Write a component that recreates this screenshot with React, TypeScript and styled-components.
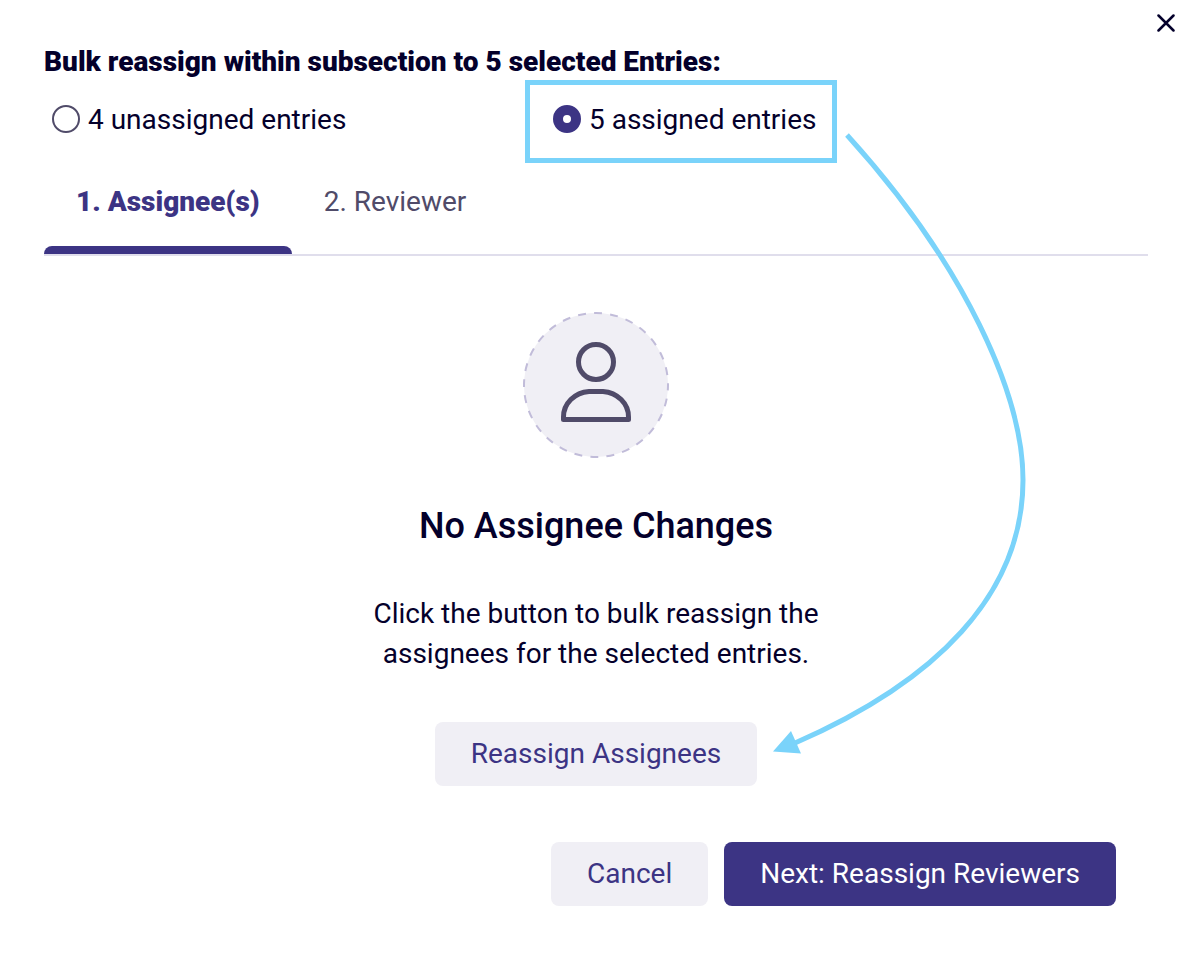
import React from "react";
import styled, { createGlobalStyle } from "styled-components";

const ink = "#04002b";
const indigo = "#3c3484";
const slate = "#504b69";
const mist = "#f0eff5";
const sky = "#7ad3fa";

const GlobalStyle = createGlobalStyle`
  *, *::before, *::after { box-sizing: border-box; }
  body {
    margin: 0;
    background: #fff;
    color: ${ink};
    font-family: Roboto, "Liberation Sans", sans-serif;
    font-size: 28px;
    line-height: 40px;
  }
  button { font: inherit; cursor: pointer; }
`;

const Dialog = styled.main`
  position: relative;
  padding: 0 40px 72px 44px;
`;

const TopBar = styled.div`
  display: flex;
  justify-content: flex-end;
  height: 42px;
  margin-right: -32px;
`;

const CloseButton = styled.button`
  display: grid;
  place-items: center;
  width: 28px;
  height: 46px;
  padding: 0;
  border: 0;
  background: none;
  color: ${ink};
`;

const Title = styled.h1`
  margin: 0;
  font-size: 28px;
  line-height: 40px;
  font-weight: 900;
`;

const Choices = styled.fieldset`
  display: flex;
  margin: 0;
  padding: 17px 94px 0 8px;
  border: 0;
`;

const Choice = styled.label`
  position: relative;
  display: flex;
  align-items: flex-start;
  gap: 8px;
  flex: 1 1 0;
  line-height: 42px;
  cursor: pointer;
`;

const Radio = styled.input`
  appearance: none;
  flex: none;
  width: 28px;
  height: 28px;
  margin: 6px 0 0;
  border: 2px solid ${slate};
  border-radius: 50%;
  background: #fff;
  &:checked {
    border: 10px solid ${indigo};
  }
`;

const Highlight = styled.span`
  position: absolute;
  top: -19px;
  left: -28px;
  width: 312px;
  height: 83px;
  border: 5px solid ${sky};
  pointer-events: none;
`;

const Tabs = styled.div`
  display: flex;
  margin-top: 24px;
  border-bottom: 2px solid #e0deec;
`;

const Tab = styled.button<{ $active?: boolean }>`
  position: relative;
  height: 89px;
  padding: 17px 32px 32px;
  border: 0;
  background: none;
  color: ${(p) => (p.$active ? indigo : slate)};
  font-weight: ${(p) => (p.$active ? 900 : 400)};
  &::after {
    content: "";
    display: ${(p) => (p.$active ? "block" : "none")};
    position: absolute;
    inset: auto 0 0;
    height: 8px;
    border-radius: 8px 8px 0 0;
    background: ${indigo};
  }
`;

const Panel = styled.section`
  display: flex;
  flex-direction: column;
  align-items: center;
  padding-top: 56px;
  text-align: center;
`;

const Heading = styled.h2`
  margin: 44px 0 0;
  font-size: 36px;
  line-height: 48px;
  font-weight: 500;
`;

const Text = styled.p`
  max-width: 480px;
  margin: 44px 0 48px;
`;

const Button = styled.button<{ $primary?: boolean }>`
  height: 64px;
  padding: 0 36px;
  border: 0;
  border-radius: 8px;
  background: ${(p) => (p.$primary ? indigo : mist)};
  color: ${(p) => (p.$primary ? "#fff" : indigo)};
`;

const Footer = styled.footer`
  display: flex;
  justify-content: flex-end;
  gap: 16px;
  padding: 56px 32px 0;
`;

const Arrow = styled.svg`
  position: absolute;
  top: 130px;
  left: 770px;
  pointer-events: none;
`;

function CloseIcon() {
  return (
    <svg width="18" height="18" viewBox="0 0 18 18" fill="none" stroke="currentColor" strokeWidth="2.5" strokeLinecap="round" aria-hidden="true">
      <path d="M1.5 1.5l15 15M16.5 1.5l-15 15" />
    </svg>
  );
}

function PersonBadge() {
  return (
    <svg width="146" height="146" viewBox="0 0 146 146" fill="none" aria-hidden="true">
      <circle cx="73" cy="73" r="72" fill={mist} stroke="#c1bcd9" strokeWidth="2" strokeDasharray="8 8.157" strokeDashoffset="2.5" />
      <circle cx="73" cy="50" r="17.5" stroke={slate} strokeWidth="5" />
      <path d="M40.5 107.5V105A27.5 25.5 0 0 1 66 79.5H80A27.5 25.5 0 0 1 105.5 105V107.5Z" stroke={slate} strokeWidth="5" strokeLinejoin="round" />
    </svg>
  );
}

export default function App() {
  return (
    <>
      <GlobalStyle />
      <Dialog>
        <TopBar>
          <CloseButton aria-label="Close">
            <CloseIcon />
          </CloseButton>
        </TopBar>
        <Title>Bulk reassign within subsection to 5 selected Entries:</Title>
        <Choices>
          <Choice>
            <Radio type="radio" name="scope" />
            4 unassigned entries
          </Choice>
          <Choice>
            <Radio type="radio" name="scope" defaultChecked />
            5 assigned entries
            <Highlight />
          </Choice>
        </Choices>
        <Tabs role="tablist">
          <Tab role="tab" aria-selected="true" $active>1. Assignee(s)</Tab>
          <Tab role="tab" aria-selected="false">2. Reviewer</Tab>
        </Tabs>
        <Panel>
          <PersonBadge />
          <Heading>No Assignee Changes</Heading>
          <Text>Click the button to bulk reassign the assignees for the selected entries.</Text>
          <Button>Reassign Assignees</Button>
        </Panel>
        <Footer>
          <Button>Cancel</Button>
          <Button $primary>Next: Reassign Reviewers</Button>
        </Footer>
        <Arrow width="260" height="630" viewBox="770 130 260 630" fill="none" aria-hidden="true">
          <path d="M847 135C965 265 1023 395 1023 480C1023 595 935 682 795 743" stroke={sky} strokeWidth="5" />
          <path d="M773 751.5L791 731L801 753.5Z" fill={sky} />
        </Arrow>
      </Dialog>
    </>
  );
}
